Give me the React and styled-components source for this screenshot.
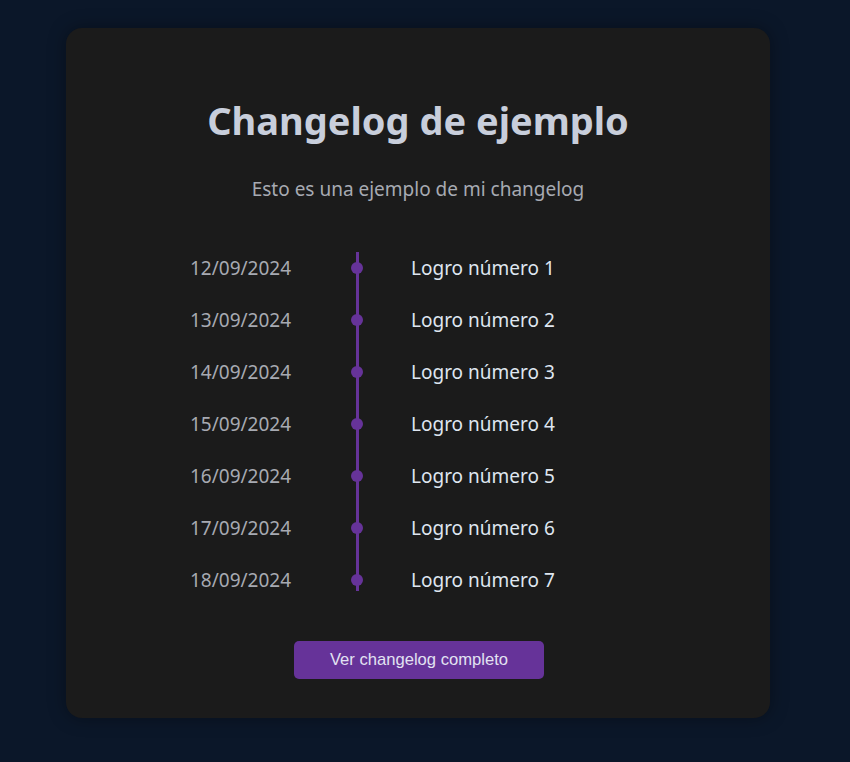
import React from "react";
import styled, { createGlobalStyle } from "styled-components";

const Global = createGlobalStyle`
  html, body { margin: 0; padding: 0; background: #0b1729; }
  body { font-family: "Noto Sans", "Open Sans", sans-serif; }
`;

const Page = styled.div`
  min-height: 762px;
  display: flex;
  justify-content: center;
  align-items: flex-start;
  padding-top: 28px;
  box-sizing: border-box;
`;

const Card = styled.section`
  width: 704px;
  height: 690px;
  box-sizing: border-box;
  margin-left: -14px;
  background: #1b1b1b;
  border-radius: 16px;
  box-shadow: 0 0 18px rgba(0, 0, 0, 0.35);
  padding: 68px 0 39px;
  display: flex;
  flex-direction: column;
  align-items: center;
`;

const Title = styled.h1`
  margin: 0;
  font-size: 38px;
  line-height: 48px;
  font-weight: 700;
  color: #c8cedb;
`;

const Subtitle = styled.p`
  margin: 32px 0 0;
  font-size: 19px;
  line-height: 26px;
  color: #a7aab2;
`;

const List = styled.ol`
  position: relative;
  list-style: none;
  margin: 50px 0 0;
  padding: 0;
  width: 456px;
  display: flex;
  flex-direction: column;
  gap: 20px;
  &::before {
    content: "";
    position: absolute;
    left: 165.5px;
    top: 0;
    bottom: 5px;
    width: 3px;
    background: #663399;
  }
`;

const Row = styled.li`
  display: grid;
  grid-template-columns: 130px 74px 1fr;
  align-items: center;
  height: 32px;
`;

const DateText = styled.span`
  font-size: 19px;
  color: #a7aab2;
`;

const Dot = styled.span`
  justify-self: center;
  position: relative;
  width: 12px;
  height: 12px;
  border-radius: 50%;
  background: #663399;
`;

const Item = styled.span`
  padding-left: 17px;
  font-size: 19px;
  color: #dfe6f0;
`;

const Button = styled.button`
  margin: 45px 0 0 2px;
  width: 250px;
  height: 38px;
  border: none;
  border-radius: 5px;
  background: #663399;
  color: #e2e2f2;
  font-family: "Liberation Sans", Arial, sans-serif;
  font-size: 16.6px;
  cursor: pointer;
`;

const entries = [
  ["12/09/2024", "Logro número 1"],
  ["13/09/2024", "Logro número 2"],
  ["14/09/2024", "Logro número 3"],
  ["15/09/2024", "Logro número 4"],
  ["16/09/2024", "Logro número 5"],
  ["17/09/2024", "Logro número 6"],
  ["18/09/2024", "Logro número 7"],
];

export default function App() {
  return (
    <>
      <Global />
      <Page>
        <Card>
          <Title>Changelog de ejemplo</Title>
          <Subtitle>Esto es una ejemplo de mi changelog</Subtitle>
          <List>
            {entries.map(([d, t]) => (
              <Row key={d}>
                <DateText>{d}</DateText>
                <Dot />
                <Item>{t}</Item>
              </Row>
            ))}
          </List>
          <Button>Ver changelog completo</Button>
        </Card>
      </Page>
    </>
  );
}
